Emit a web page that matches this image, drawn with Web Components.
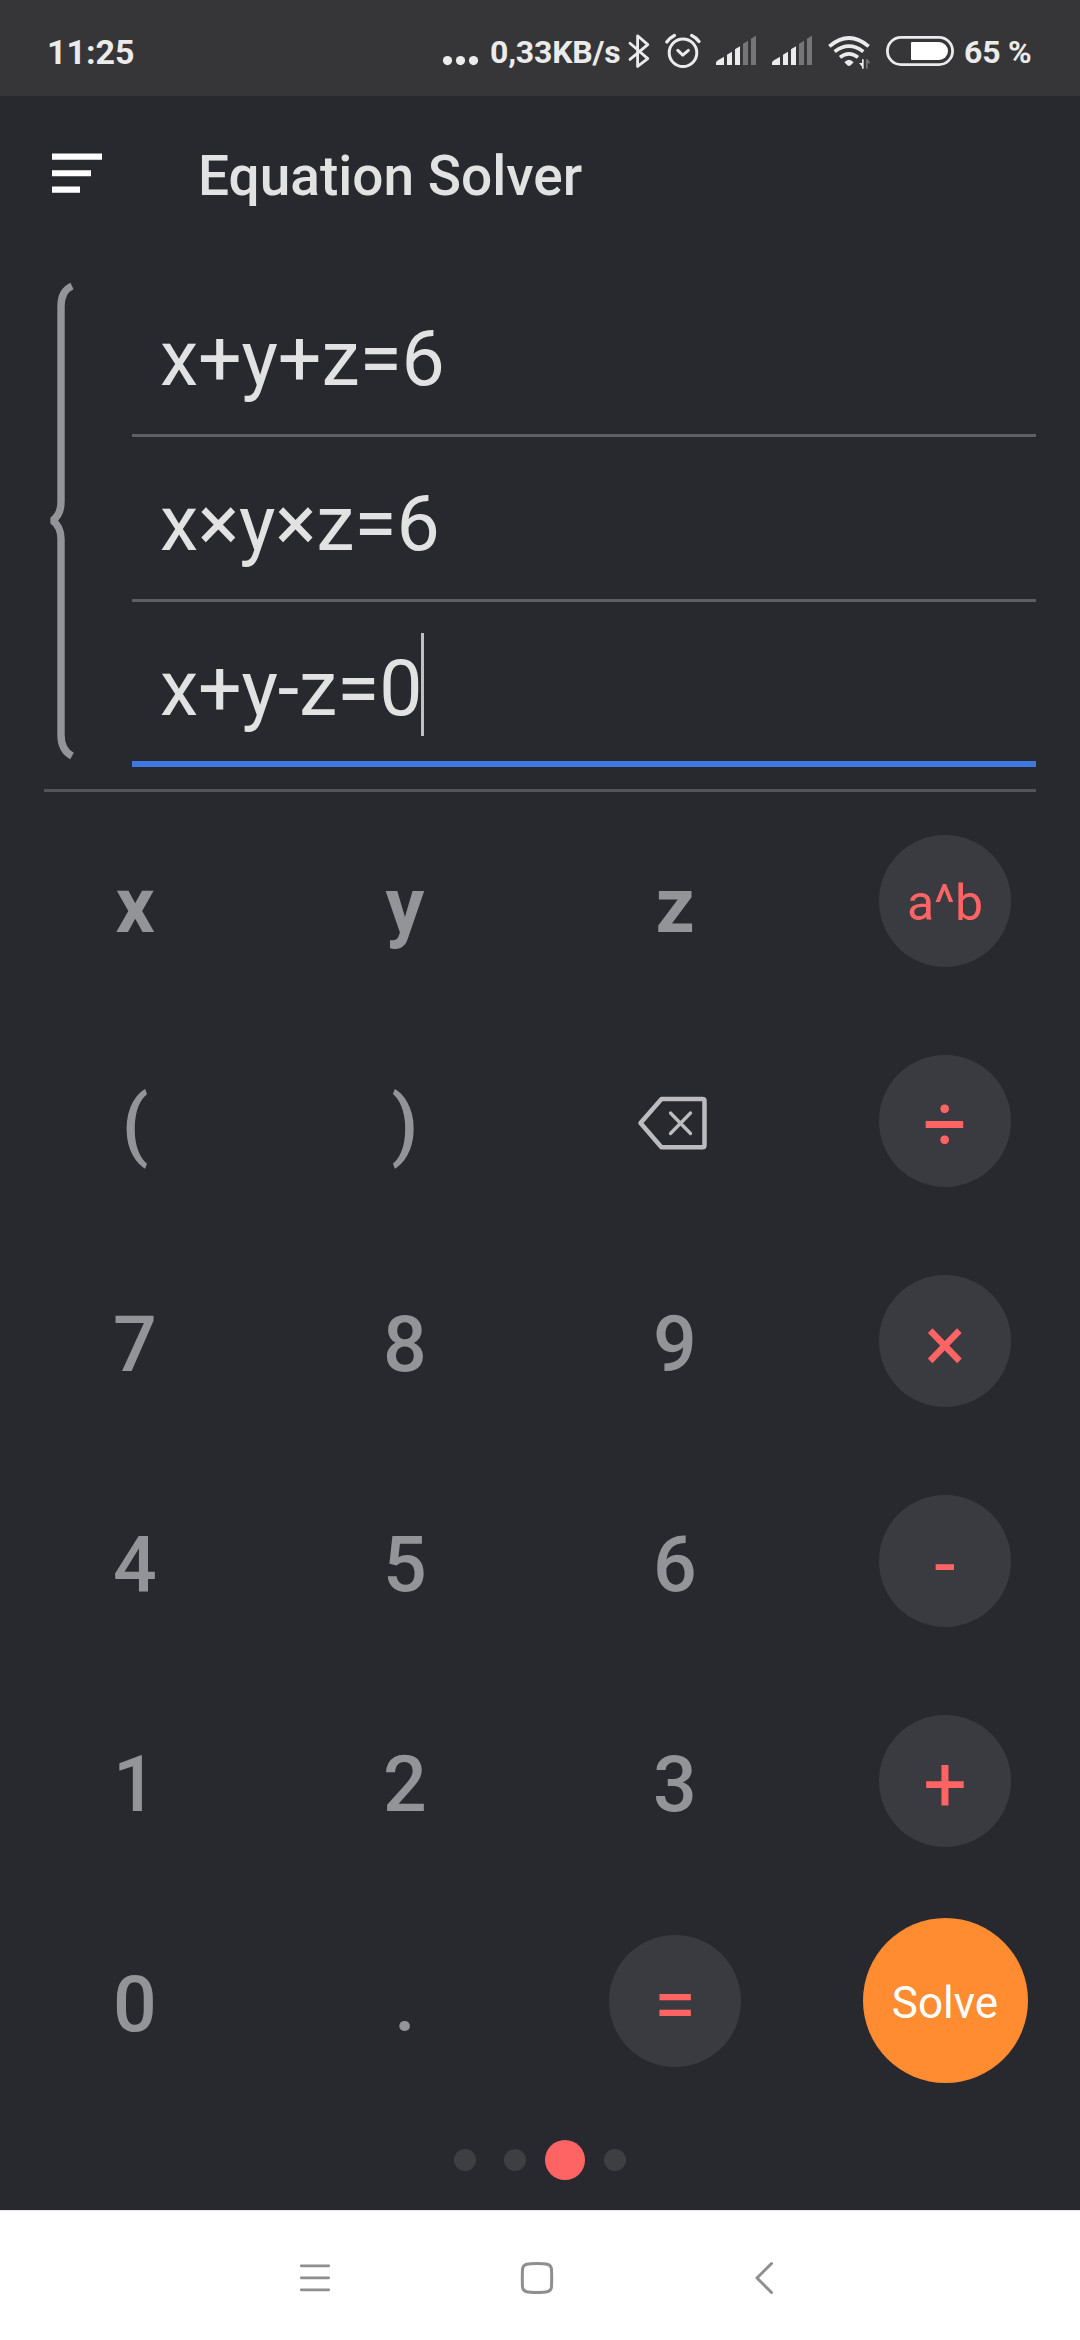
<!DOCTYPE html>
<html lang="en">
<head>
<meta charset="utf-8">
<title>Equation Solver</title>
<style>
html,body{margin:0;padding:0;background:#28292e}
body{width:1080px;height:2340px;overflow:hidden;font-family:Roboto,"Liberation Sans",sans-serif}
</style>
</head>
<body>
<solver-app></solver-app>
<script>
const define = (name, html) => customElements.define(name, class extends HTMLElement {
  constructor() {
    super();
    const t = document.createElement('template');
    t.innerHTML = html;
    this.attachShadow({mode: 'open'}).appendChild(t.content.cloneNode(true));
  }
});

const bars = x => `<svg width="40" height="30" viewBox="${x} 78 120 90">
  <g fill="#ebebeb"><path d="M${x} 165v-7q1-4 6-7l18-11v25z"/><path d="M${x+33} 165v-31l15-9v40z"/><path d="M${x+57} 165v-47l15-9v56z"/></g>
  <g fill="#757577"><path d="M${x+81} 165v-64l15-9v73z"/><path d="M${x+105} 165v-79l15-9v88z"/></g></svg>`;

define('status-bar', `<style>
:host{display:flex;height:96px;background:#363638;color:#ebebeb;font-weight:700}
.time{width:396px;padding-left:47px;font-size:34px;line-height:104px}
.t{font-size:32px;line-height:105px;white-space:nowrap;letter-spacing:-.2px}
svg{display:block;flex:none;overflow:visible}
</style>
<div class="time">11:25</div>
<svg width="35" height="96" viewBox="443 0 35 96" fill="#ebebeb"><circle cx="447.5" cy="60.600" r="4.600"/><circle cx="460.500" cy="60.600" r="4.600"/><circle cx="473.500" cy="60.600" r="4.600"/></svg>
<div class="t" style="margin-left:12px;width:138px">0,33KB/s</div>
<svg width="22" height="96" viewBox="628 0 22 96" fill="none" stroke="#ebebeb" stroke-width="2.8" stroke-linejoin="round" stroke-linecap="round"><path d="M630 43.2L647.8 58.6L637.6 66.4V35.8L647.8 44.6L630 59.4"/></svg>
<svg style="margin-left:15px" width="35" height="96" viewBox="665 0 35 96" fill="none" stroke="#ebebeb" stroke-width="3" stroke-linecap="round" stroke-linejoin="round"><circle cx="683" cy="52.7" r="13.8"/><path d="M677.8 50.4l5 4.8 5.6-4.8"/><path d="M666.8 42q3-4.200 7.600-6.500M699 41.500q-3-4-7.300-6" stroke-width="3.300"/></svg>
<div style="display:flex;gap:16px;margin:36px 0 0 16px">${bars(48)}${bars(216)}</div>
<svg style="margin-left:16px" width="43" height="96" viewBox="384 -30 129 288" fill="none" stroke="#ebebeb" stroke-width="11"><path d="M388 109Q447 59 506 109M404 125Q447 92 490 125M420 142Q447 121 474 142"/><path fill="#ebebeb" stroke="none" d="M433 157q14-15 28 0l-9 9q-5 4-10 0zM486 148h5v28h-5v-6l-9-11h9z"/><path fill="#757577" stroke="none" d="M498 148h5l8 12h-8v16h-5z"/></svg>
<svg style="margin-left:15px" width="68" height="96" viewBox="886 0 68 96"><rect x="887.400" y="37.400" width="65.200" height="27.200" rx="13.600" fill="none" stroke="#ebebeb" stroke-width="2.800"/><path fill="#fff" d="M912 42h27a9 9 0 0 1 0 18h-27a1 1 0 0 1-1-1v-16a1 1 0 0 1 1-1z"/></svg>
<div class="t" style="margin-left:10px">65 %</div>`);

define('app-bar', `<style>
:host{display:flex;height:160px;color:#e2e2e2;font-size:55px;font-weight:500;line-height:160px;padding-left:52px}
svg{margin:57px 96px 0 0;flex:none}
</style>
<svg width="50" height="41" viewBox="0 0 50 41" fill="#fff"><path d="M0 .5h50v6.200H0zM0 17.200h39v6H0zM0 33.500h28v6.200H0z"/></svg>
<slot></slot>`);

define('equation-row', `<style>
:host{display:flex;align-items:flex-start;box-sizing:border-box;height:165px;padding-left:28px;border-bottom:3px solid #5e5f63;color:#e2e2e2;font-size:77px;letter-spacing:-.15px;line-height:90px;padding-top:42px}
:host([active]){border-bottom:6px solid #3f78e0}
i{display:none;width:3px;height:103px;background:#c0c0c2;margin:-11px 0 0 -1px}
:host([active]) i{display:block}
</style><slot></slot><i></i>`);

define('equation-system', `<style>
:host{display:flex;margin:0 44px;height:533px;border-bottom:3px solid #545559}
svg{flex:none;width:88px;height:533px}
.rows{flex:1;display:flex;flex-direction:column;padding-top:16px}
</style>
<svg viewBox="44 256 88 533" fill="none" stroke="#939498" stroke-width="7.400" stroke-linejoin="bevel"><path d="M72 286Q61 291 61 306V502C61 510 59 516 52.500 520.500C59 525 61 531 61 539V735Q61 750 72 756"/></svg>
<div class="rows"><slot></slot></div>`);

define('calc-key', `<style>
:host{display:flex;align-items:center;justify-content:center;color:#939498;font-size:77px;font-weight:500;line-height:90px}
div{display:flex;align-items:center;justify-content:center;width:132px;height:132px;border-radius:50%;box-sizing:border-box;padding-top:7px}
:host([variable]) div{font-weight:700;padding-top:9px}
:host([op]) div{background:#3a3b40;color:#ff6464;font-weight:400}
:host([small]) div{font-size:50px;padding-top:4px}
:host([solve]) div{width:165px;height:165px;background:#ff8c30;color:#fff;font-size:44px;font-weight:400;padding-top:4px;margin-top:-1px}
:host([icon]) div{padding-top:3px}
</style><div><slot></slot></div>`);

define('backspace-icon', `<style>:host{display:block;width:72px;height:56px;margin-left:-4px}svg{display:block}</style>
<svg width="72" height="56" viewBox="637 1095 72 56" fill="none" stroke="#bcbcbf" stroke-width="4.500" stroke-linejoin="round" stroke-linecap="round"><path d="M661.500 1099H702.500Q704.500 1099 704.500 1101V1145Q704.500 1147.300 702.500 1147.300H661.500L640.500 1123Z"/><path stroke-width="3.300" d="M670.500 1113l20 20.500M690.500 1113l-20 20.500"/></svg>`);

define('key-pad', `<style>
:host{display:grid;grid-template-columns:repeat(4,270px);grid-auto-rows:220px;margin-top:-1px}
</style><slot></slot>`);

define('page-dots', `<style>
:host{display:flex;align-items:center;justify-content:center;height:40px;margin-top:29px}
b{width:22px;height:22px;border-radius:50%;background:#3e3f43;margin:0 14px}
.on{width:40px;height:40px;background:#ff6464;margin:0 5px}
</style><b></b><b></b><b class="on"></b><b></b>`);

define('nav-bar', `<style>
:host{display:flex;box-sizing:border-box;height:130px;margin-top:30px;background:#fff;border-top:1px solid #e6e6e6}
svg{display:block;margin-top:49px;flex:none}
</style>
<svg style="margin-left:298px" width="34" height="38" viewBox="298 2260 34 38" stroke="#8f8f8f" stroke-width="2.800" stroke-linecap="round"><path d="M301.300 2265.800h27.400M301.300 2277.800h27.400M301.300 2289.800h27.400"/></svg>
<svg style="margin-left:187px" width="36" height="38" viewBox="519 2260 36 38" fill="none" stroke="#8f8f8f" stroke-width="3"><path d="M537 2263.500q7.500 0 10.300 .7q3.500 .8 4.100 4.300q.3 3 .3 9.500t-.3 9.500q-.6 3.500-4.100 4.300q-2.800 .7-10.300 .7t-10.300-.7q-3.500-.8-4.100-4.300q-.3-3-.3-9.500t.3-9.500q.6-3.500 4.100-4.300q2.800-.7 10.300-.7z"/></svg>
<svg style="margin-left:198px" width="24" height="38" viewBox="753 2260 24 38" fill="none" stroke="#8f8f8f" stroke-width="3" stroke-linecap="round" stroke-linejoin="round"><path d="M771.500 2263.500L757 2278L771.500 2292.500"/></svg>`);

define('solver-app', `<style>
:host{display:flex;flex-direction:column;width:1080px;height:2340px;background:#28292e}
</style>
<status-bar></status-bar>
<app-bar>Equation Solver</app-bar>
<equation-system>
  <equation-row>x+y+z=6</equation-row>
  <equation-row>x×y×z=6</equation-row>
  <equation-row active>x+y-z=0</equation-row>
</equation-system>
<key-pad>
  <calc-key variable>x</calc-key><calc-key variable>y</calc-key><calc-key variable>z</calc-key><calc-key op small>a^b</calc-key>
  <calc-key>(</calc-key><calc-key>)</calc-key><calc-key icon><backspace-icon></backspace-icon></calc-key><calc-key op>÷</calc-key>
  <calc-key>7</calc-key><calc-key>8</calc-key><calc-key>9</calc-key><calc-key op>×</calc-key>
  <calc-key>4</calc-key><calc-key>5</calc-key><calc-key>6</calc-key><calc-key op>-</calc-key>
  <calc-key>1</calc-key><calc-key>2</calc-key><calc-key>3</calc-key><calc-key op>+</calc-key>
  <calc-key>0</calc-key><calc-key>.</calc-key><calc-key op>=</calc-key><calc-key solve>Solve</calc-key>
</key-pad>
<page-dots></page-dots>
<nav-bar></nav-bar>`);
</script>
</body>
</html>
